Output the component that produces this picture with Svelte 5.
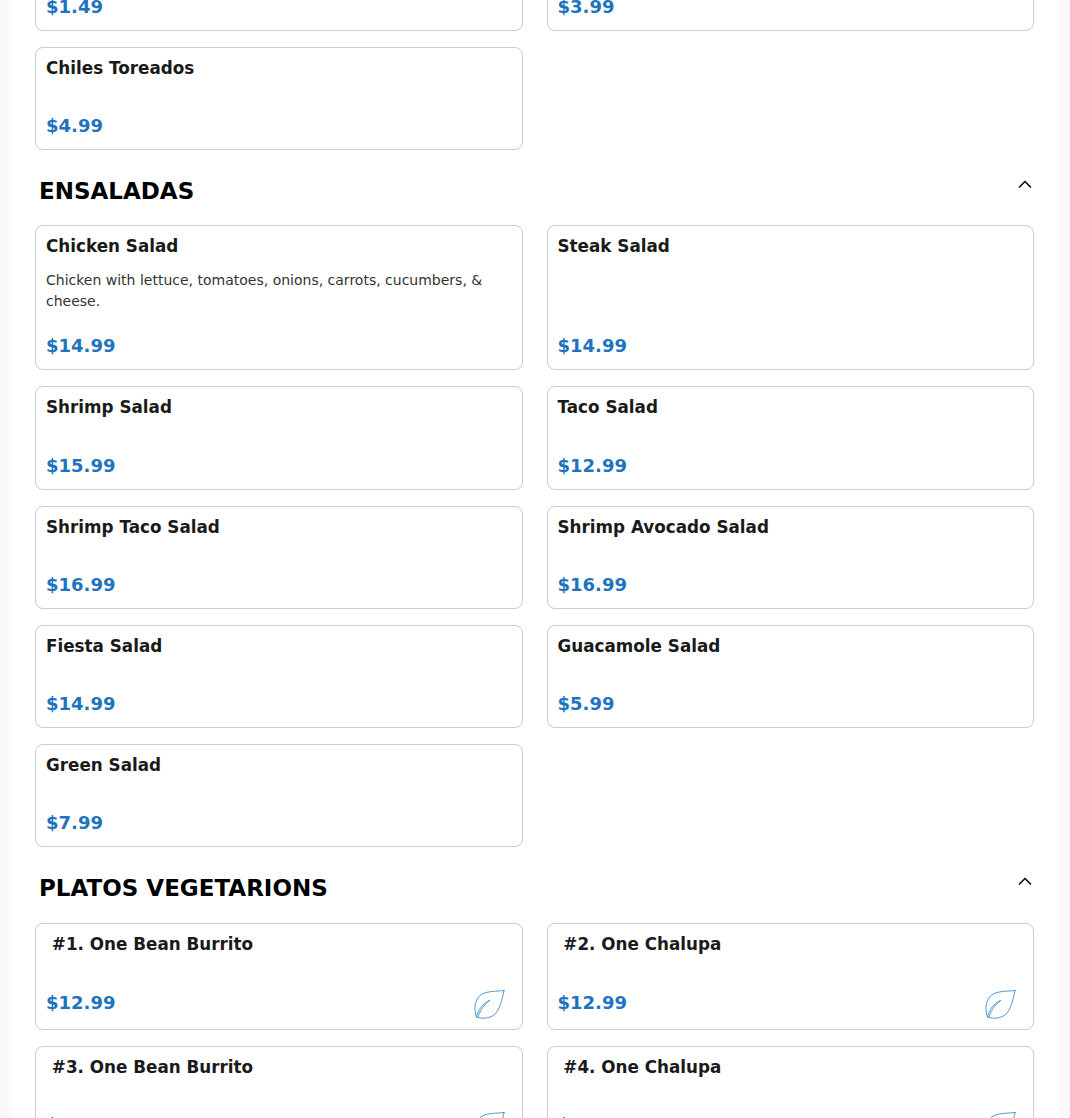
<script>
    const sections = [
        {
            items: [
                { name: "Tostada", price: "$1.49" },
                { name: "Side of Rice", price: "$3.99" },
                { name: "Chiles Toreados", price: "$4.99" },
            ],
        },
        {
            title: "ENSALADAS",
            items: [
                {
                    name: "Chicken Salad",
                    description:
                        "Chicken with lettuce, tomatoes, onions, carrots, cucumbers, & cheese.",
                    price: "$14.99",
                },
                { name: "Steak Salad", price: "$14.99" },
                { name: "Shrimp Salad", price: "$15.99" },
                { name: "Taco Salad", price: "$12.99" },
                { name: "Shrimp Taco Salad", price: "$16.99" },
                { name: "Shrimp Avocado Salad", price: "$16.99" },
                { name: "Fiesta Salad", price: "$14.99" },
                { name: "Guacamole Salad", price: "$5.99" },
                { name: "Green Salad", price: "$7.99" },
            ],
        },
        {
            title: "PLATOS VEGETARIONS",
            items: [
                { name: "\u00a0#1. One Bean Burrito", price: "$12.99", veg: true },
                { name: "\u00a0#2. One Chalupa", price: "$12.99", veg: true },
                { name: "\u00a0#3. One Bean Burrito", price: "$12.99", veg: true },
                { name: "\u00a0#4. One Chalupa", price: "$12.99", veg: true },
            ],
        },
    ];
</script>

<div class="viewport">
    <main class="menu">
        {#each sections as section}
            <section class="section">
                {#if section.title}
                    <header class="section-header">
                        <h2>{section.title}</h2>
                        <svg class="chevron" viewBox="0 0 16 16" width="16" height="16" fill="none" stroke="currentColor" stroke-width="1.7" stroke-linecap="round" stroke-linejoin="round">
                            <path d="M2.5 11 8 5.5 13.5 11" />
                        </svg>
                    </header>
                {/if}
                <div class="grid">
                    {#each section.items as item}
                        <article class="card">
                            <h3>{item.name}</h3>
                            <p>{item.description ?? ""}</p>
                            <div class="bottom">
                                <span class="price">{item.price}</span>
                                {#if item.veg}
                                    <svg class="leaf" viewBox="0 0 32 32" width="32" height="32" fill="none" stroke="currentColor" stroke-width="0.8" stroke-linejoin="round" stroke-linecap="round">
                                        <path d="M31 2.5C24 3.5 12 2.5 6.5 8C2 12.5 0.5 21 3.5 29C9 31 16 30.5 21 27C26 23.5 29.5 11 31 2.5Z" />
                                        <path d="M3.5 29C5 22 9.5 15.5 16.5 12.5" />
                                        <path d="M5 29.5C6.5 23 10.5 17 16.5 12.5" />
                                    </svg>
                                {/if}
                            </div>
                        </article>
                    {/each}
                </div>
            </section>
        {/each}
    </main>
</div>

<style>
    :global(body) {
        background: #fafafa;
        font-family: "DejaVu Sans", sans-serif;
    }

    .viewport {
        height: 1118px;
        overflow: hidden;
    }

    .menu {
        width: 999px;
        min-height: 1300px;
        margin: -72.6px 0 0 11px;
        padding: 0 25px 0 24px;
        background: #fff;
    }

    .section-header {
        display: flex;
        justify-content: space-between;
        align-items: flex-start;
        padding: 26px 1px 19.5px 4px;
    }

    .section:last-child .section-header {
        padding-bottom: 20.1px;
    }

    .section-header h2 {
        margin: 0;
        font-size: 23px;
        line-height: 30px;
        color: #000;
    }

    .chevron {
        color: #111;
    }

    .grid {
        display: grid;
        grid-template-columns: 1fr 1fr;
        gap: 16px 24px;
    }

    .card {
        box-sizing: border-box;
        display: flex;
        flex-direction: column;
        min-width: 0;
        padding: 8px 10px 9px;
        border: 1px solid #ccc;
        border-radius: 8px;
        background: #fff;
    }

    h3 {
        margin: 0 0 12.2px;
        font-size: 16.8px;
        line-height: 24px;
        font-weight: 700;
        color: #1a1a1a;
    }

    p {
        margin: 0 0 19px;
        font-size: 14px;
        line-height: 21px;
        color: #333;
    }

    .bottom {
        display: flex;
        justify-content: space-between;
        align-items: flex-start;
        margin-top: auto;
    }

    .price {
        font-size: 18px;
        line-height: 29px;
        font-weight: 700;
        color: #1e73be;
    }

    .leaf {
        margin-right: 7px;
        color: #2a7fc4;
    }
</style>
